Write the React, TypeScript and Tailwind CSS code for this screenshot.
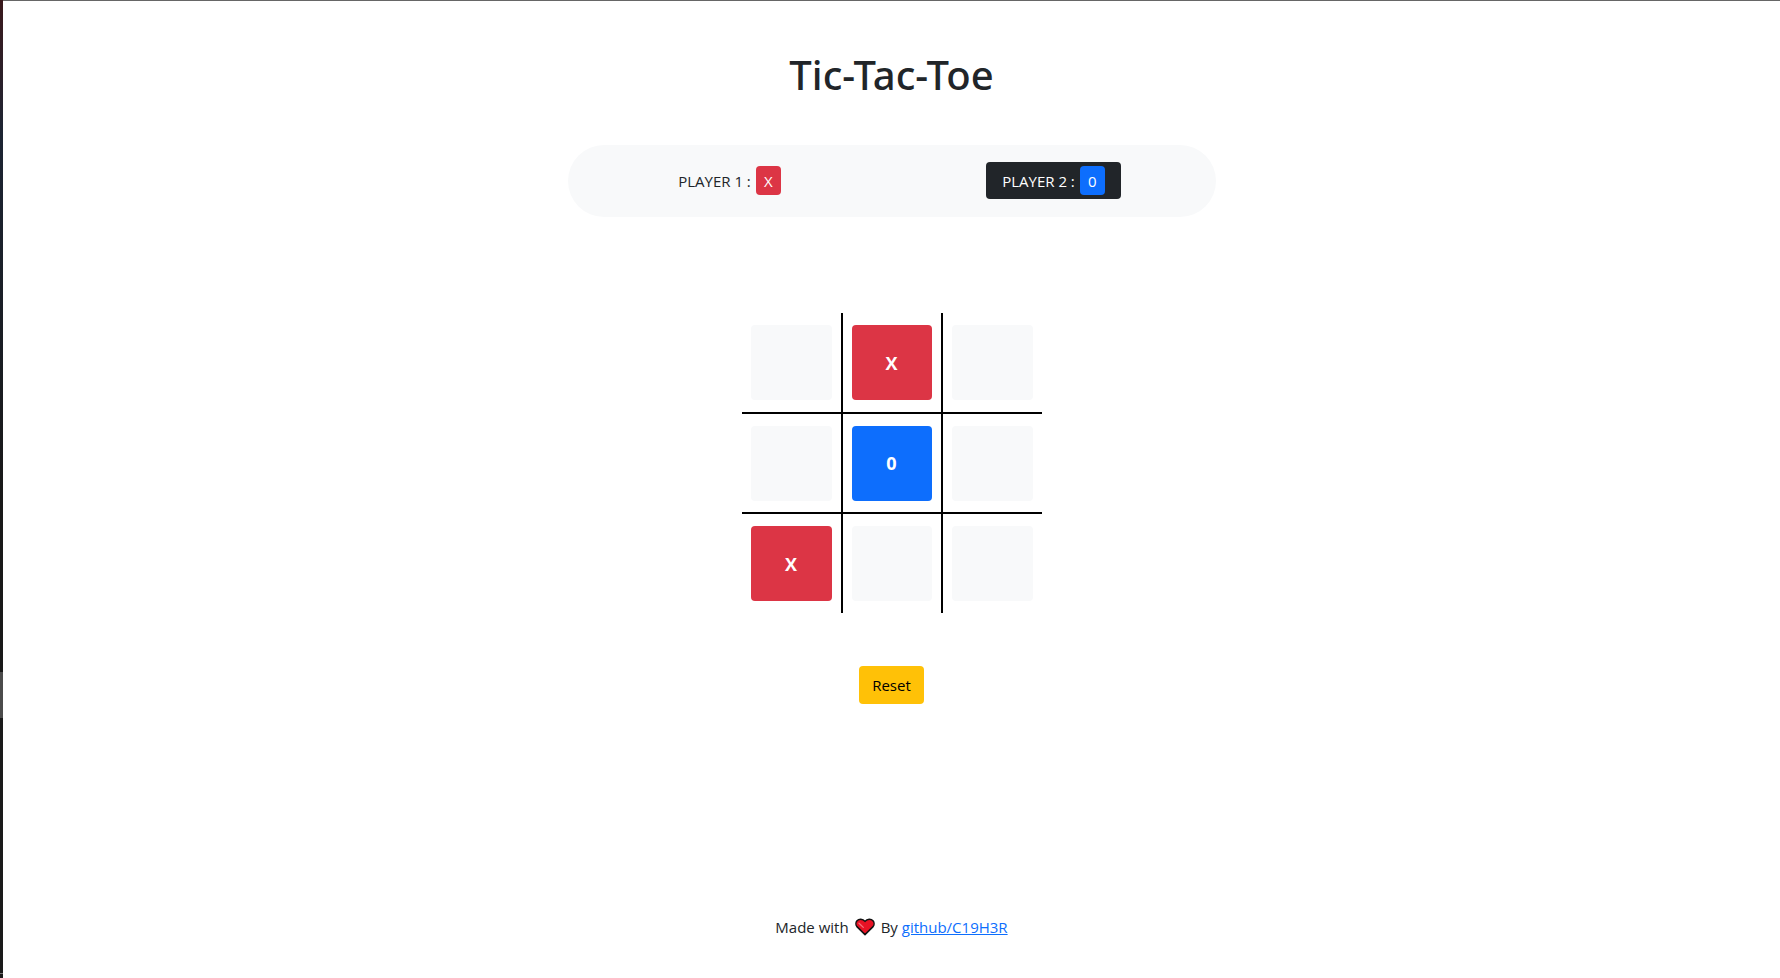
import { useState } from "react";

type Mark = "X" | "0" | "";

const START: Mark[] = ["", "X", "", "", "0", "", "X", "", ""];

function markColor(mark: Mark) {
  if (mark === "X") return "bg-[#dc3545]";
  if (mark === "0") return "bg-[#0d6efd]";
  return "bg-[#f8f9fa]";
}

function Badge({ mark }: { mark: Mark }) {
  return (
    <span
      className={`inline-flex h-[29px] w-[25px] items-center justify-center rounded-sm text-white ${markColor(mark)}`}
    >
      {mark}
    </span>
  );
}

function Player({ name, mark, active }: { name: string; mark: Mark; active: boolean }) {
  return (
    <div className="flex flex-1 justify-center">
      <div
        className={`flex items-center gap-[5px] rounded-sm px-4 py-1 ${active ? "bg-[#212529] text-white" : ""}`}
      >
        <span>{name} :</span>
        <Badge mark={mark} />
      </div>
    </div>
  );
}

function Heart() {
  return (
    <svg viewBox="0 0 20 18" className="h-[18px] w-5" aria-label="love" role="img">
      <path
        d="M10 16.6 1.9 8.6C0.6 7 0.6 4.3 2 2.7 3.9 0.7 7.7 0.5 10 3.4 12.3 0.5 16.1 0.7 18 2.7 19.4 4.3 19.4 7 18.1 8.6Z"
        fill="#e81224"
        stroke="#111"
        strokeWidth="1.5"
        strokeLinejoin="round"
      />
      <path d="M4 5.2 8.3 9.4" stroke="#f4717c" strokeWidth="1.3" strokeLinecap="round" />
    </svg>
  );
}

export default function App() {
  const [cells, setCells] = useState<Mark[]>(START);
  const turn: Mark = cells.filter(Boolean).length % 2 === 0 ? "X" : "0";

  const play = (index: number) => {
    if (!cells[index]) setCells(cells.map((c, i) => (i === index ? turn : c)));
  };

  return (
    <div className="flex min-h-screen bg-white font-['Open_Sans','Noto_Sans',sans-serif] text-[15px] leading-6 text-[#212529]">
      <div className="flex w-[3px] flex-col bg-[#1a1a1a]" aria-hidden="true">
        <div className="flex-1 bg-linear-to-b from-[#3a181c] via-[#1c2433] via-20% to-[#181818] to-75%" />
        <div className="h-[46px] bg-[#4b4b4b]" />
        <div className="h-[255px]" />
        <div className="h-px bg-[#777777]" />
        <div className="h-1" />
      </div>
      <div className="flex flex-1 flex-col items-center border-t border-[#666666]">
        <h1 className="mt-[50px] font-['Noto_Sans','Open_Sans',sans-serif] text-[40px] leading-[48px] font-medium">
          Tic-Tac-Toe
        </h1>

        <div className="mt-[46px] flex w-full max-w-[648px] items-center rounded-full bg-[#f8f9fa] pt-[17px] pb-[18px]">
          <Player name="PLAYER 1" mark="X" active={turn === "X"} />
          <Player name="PLAYER 2" mark="0" active={turn === "0"} />
        </div>

        <main className="mt-24 grid grid-cols-[101px_100px_99px] grid-rows-[101px_100px_99px]">
          {cells.map((mark, i) => (
            <div
              key={i}
              className={`flex items-center border-black px-[9px] ${i % 3 < 2 ? "border-r-2" : ""} ${i < 6 ? "border-b-2" : ""}`}
            >
              <button
                type="button"
                aria-label={mark ? undefined : `Cell ${i + 1}`}
                onClick={() => play(i)}
                className={`h-[75px] w-full rounded-sm text-lg font-bold text-white ${markColor(mark)}`}
              >
                {mark}
              </button>
            </div>
          ))}
        </main>

        <button
          type="button"
          onClick={() => setCells(Array<Mark>(9).fill(""))}
          className="mt-[53px] h-[38px] w-[65px] rounded-sm bg-[#ffc107] text-black"
        >
          Reset
        </button>

        <footer className="mt-auto mb-[39px] flex items-center gap-[6px]">
          <span>Made with</span>
          <Heart />
          <span>
            By{" "}
            <a href="https://github.com/C19H3R" className="text-[#0d6efd] underline">
              github/C19H3R
            </a>
          </span>
        </footer>
      </div>
    </div>
  );
}
